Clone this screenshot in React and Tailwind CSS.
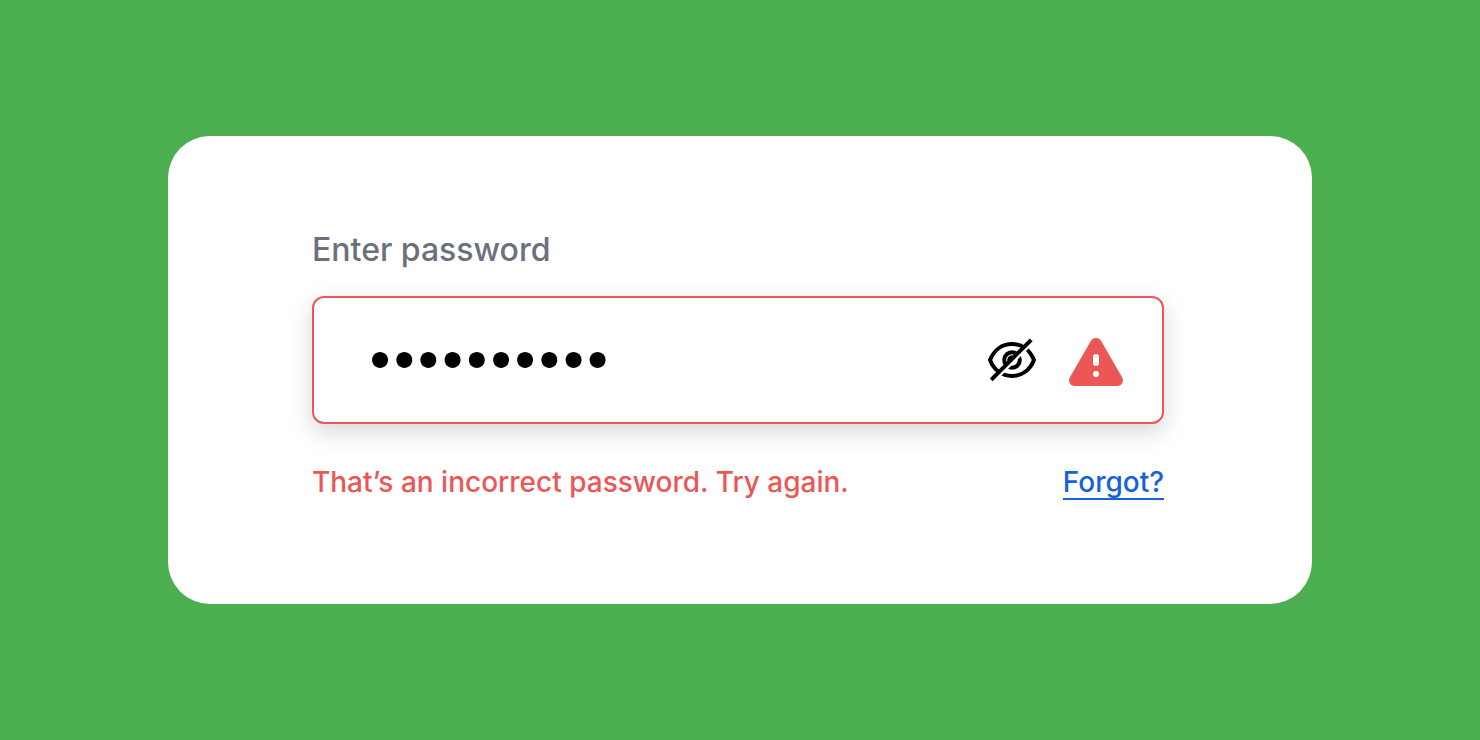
import { useState } from "react";

function EyeOffIcon() {
  return (
    <svg viewBox="0 0 48 48" className="size-12" fill="none" stroke="#000" strokeWidth="4" aria-hidden="true">
      <path d="M2 24C6 14 14 8 24 8s18 6 22 16c-4 10-12 16-22 16S6 34 2 24Z" strokeLinejoin="round" />
      <circle cx="24" cy="24" r="7.8" />
      <path d="M20.8 25a3.3 3.3 0 0 1 3.6-4.2" strokeWidth="3" />
      <path d="M5.2 45.2 45.2 5.2" stroke="#fff" strokeWidth="3.6" />
      <path d="M3.2 43.8 43.2 3.8" />
    </svg>
  );
}

function WarningIcon() {
  return (
    <svg viewBox="-1 -4 56 52" className="h-[52px] w-14" role="img" aria-label="Error">
      <path
        d="M21.8 3.1a6 6 0 0 1 10.4 0L53.2 39.5A5.7 5.7 0 0 1 48.3 48H5.7A5.7 5.7 0 0 1 .8 39.5Z"
        fill="#eb5757"
      />
      <rect x="24" y="16" width="6" height="12" rx="3" fill="#fff" />
      <circle cx="27" cy="36" r="3" fill="#fff" />
    </svg>
  );
}

export default function App() {
  const [password, setPassword] = useState("abcdefghij");
  const [visible, setVisible] = useState(false);

  return (
    <main className="flex min-h-screen items-center justify-center bg-[#4caf50] px-42 py-8 font-['Inter',sans-serif]">
      <form className="w-full rounded-[42px] bg-white px-36 pt-[94px] pb-[104px]" onSubmit={(e) => e.preventDefault()}>
        <div className="mr-1">
          <label htmlFor="password" className="block text-[32px] leading-10 font-medium text-[#6a707c]">
            Enter password
          </label>
          <div className="mt-[26px] flex h-32 items-center rounded-xl border-2 border-[#eb5757] bg-white pr-[38px] pl-[54px] shadow-[0_8px_24px_rgba(0,0,0,0.16)]">
            <input
              id="password"
              type={visible ? "text" : "password"}
              value={password}
              onChange={(e) => setPassword(e.target.value)}
              aria-invalid="true"
              aria-describedby="password-error"
              className="h-full min-w-0 flex-1 bg-transparent pb-2 text-[51px] font-bold text-black outline-none"
            />
            <button
              type="button"
              aria-label="Toggle password visibility"
              aria-pressed={visible}
              onClick={() => setVisible(!visible)}
              className="mr-8 shrink-0"
            >
              <EyeOffIcon />
            </button>
            <WarningIcon />
          </div>
          <div className="mt-[42px] flex items-start justify-between text-[28px] leading-8 font-medium">
            <p id="password-error" className="pb-0.5 text-[#eb5757]">
              That’s an incorrect password. Try again.
            </p>
            <a href="#forgot" className="border-b-2 border-[#1662dd] text-[#1662dd]">
              Forgot?
            </a>
          </div>
        </div>
      </form>
    </main>
  );
}
